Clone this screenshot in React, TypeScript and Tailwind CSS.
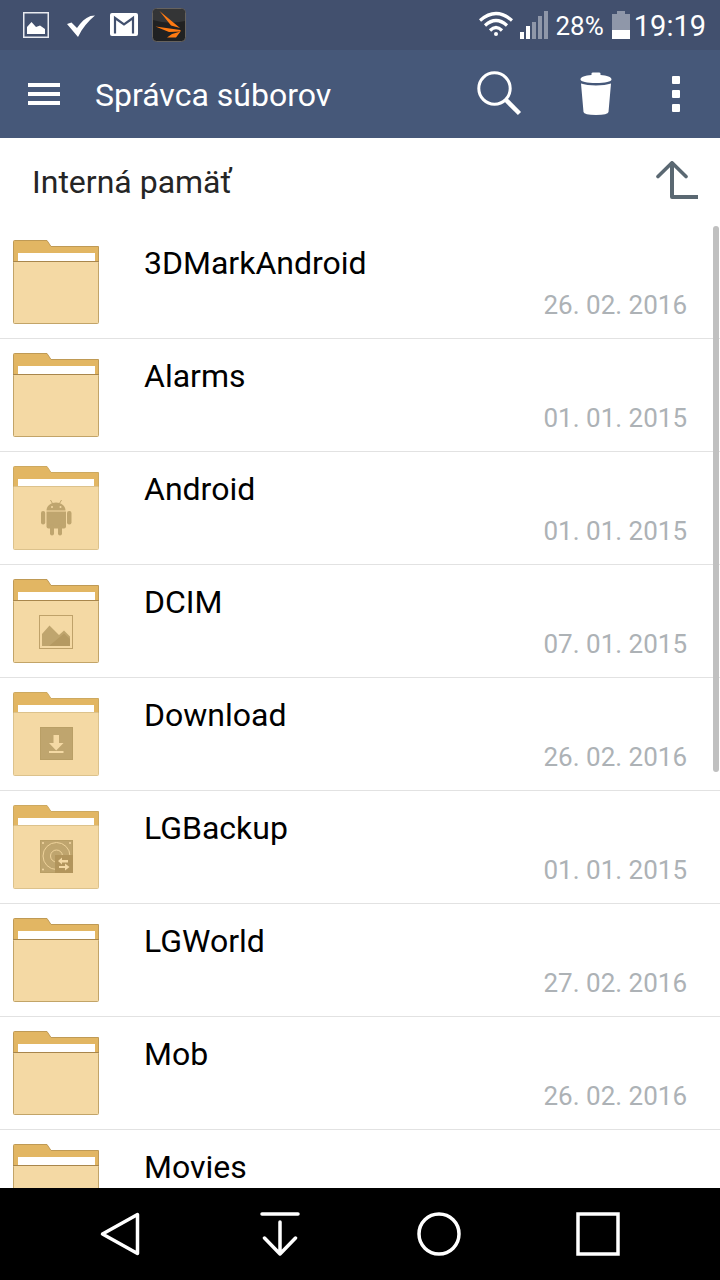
import type { ReactNode } from 'react';

type FolderKind = 'plain' | 'android' | 'image' | 'download' | 'backup';

interface Folder {
  name: string;
  date?: string;
  kind: FolderKind;
}

const folders: Folder[] = [
  { name: '3DMarkAndroid', date: '26. 02. 2016', kind: 'plain' },
  { name: 'Alarms', date: '01. 01. 2015', kind: 'plain' },
  { name: 'Android', date: '01. 01. 2015', kind: 'android' },
  { name: 'DCIM', date: '07. 01. 2015', kind: 'image' },
  { name: 'Download', date: '26. 02. 2016', kind: 'download' },
  { name: 'LGBackup', date: '01. 01. 2015', kind: 'backup' },
  { name: 'LGWorld', date: '27. 02. 2016', kind: 'plain' },
  { name: 'Mob', date: '26. 02. 2016', kind: 'plain' },
  { name: 'Movies', kind: 'plain' },
];

const emblems: Record<FolderKind, ReactNode> = {
  plain: null,
  android: (
    <g fill="#bfa56e">
      <path d="M33.5 44.500c0-4.500 4.200-8 9.500-8s9.500 3.500 9.500 8z" />
      <path d="M37.500 34l2 3.500M48.500 34l-2 3.500" stroke="#bfa56e" strokeWidth="1" />
      <circle cx="39" cy="41" r="1" fill="#f4d9a4" />
      <circle cx="47.500" cy="41" r="1" fill="#f4d9a4" />
      <path d="M33.500 45.500h19.500v15a2 2 0 0 1-2 2h-15.500a2 2 0 0 1-2-2z" />
      <rect x="28" y="45" width="4.200" height="13.500" rx="2.100" />
      <rect x="54" y="45" width="4.500" height="13.500" rx="2.100" />
      <rect x="37" y="58" width="4" height="11.500" rx="2" />
      <rect x="45" y="58" width="4" height="11.500" rx="2" />
    </g>
  ),
  image: (
    <g>
      <rect x="26.500" y="36.500" width="33" height="33" fill="none" stroke="#bfa26a" />
      <path d="M29 67V55l7.500-8.500L46 56l5-4.500 6 6V67z" fill="#bfa56e" />
      <path d="M36 67l15-12.500L57 60v7z" fill="#b59a62" />
    </g>
  ),
  download: (
    <g>
      <rect x="27.500" y="35.500" width="32" height="32" fill="#bfa56e" stroke="#b99f66" />
      <path d="M40.500 43h5.500v8h4.500L43.200 58.500 36 51h4.500zM36 59h14.500v2H36z" fill="#f4d9a4" />
    </g>
  ),
  backup: (
    <g>
      <rect x="27.500" y="35.500" width="32" height="32" fill="#bfa56e" stroke="#b99f66" />
      <circle cx="43.500" cy="51" r="13.500" fill="none" stroke="#efd39b" />
      <circle cx="43.500" cy="51" r="6" fill="none" stroke="#efd39b" />
      <circle cx="30" cy="38" r="1" fill="#f4d9a4" />
      <circle cx="57" cy="38" r="1" fill="#f4d9a4" />
      <circle cx="30" cy="64.500" r="1" fill="#f4d9a4" />
      <rect x="42" y="50" width="18" height="18" fill="#b2955c" />
      <path d="M45 56l4-3.500V55h6v2.500h-6v2zM56.500 62L52 65.500V63h-6v-2h6v-2.500z" fill="#f4d9a4" />
    </g>
  ),
};

function FolderIcon({ kind }: { kind: FolderKind }) {
  // folders with an emblem have a softer outline and a slightly taller front
  const soft = kind !== 'plain' && kind !== 'image';
  const top = soft ? 20 : 21;
  return (
    <svg width="86" height="84" viewBox="0 0 86 84" aria-hidden="true">
      <path
        d="M.5 22V1.500Q.5.500 1.500.500H34l4 6H85.500V22z"
        fill="#e2b663"
        stroke={soft ? '#cda960' : '#bf9a55'}
      />
      <rect x="5" y="13" width={soft ? 76 : 77} height="9" fill="#fff" />
      <rect
        x=".5"
        y={top + 0.5}
        width="85"
        height={83 - top}
        rx="1"
        fill="#f4d9a4"
        stroke={soft ? '#dcc28c' : '#c2a468'}
      />
      {!soft && <path d="M0 21.500h86" stroke="#a8864c" />}
      {emblems[kind]}
    </svg>
  );
}

function StatusBar() {
  return (
    <div className="flex h-[50px] shrink-0 items-center justify-between bg-[#42506e] pl-[22px] pr-[14px] text-white">
      <div className="flex items-center gap-[14px]">
        <svg width="28" height="28" viewBox="0 0 28 28" aria-hidden="true">
          <rect x="1.750" y="1.750" width="24.500" height="24.500" fill="none" stroke="#e8eaf0" strokeWidth="1.500" />
          <path d="M5 23v-7l4.500-5 4.500 5 4-1.500 5 3.500V23z" fill="#fff" />
        </svg>
        <svg width="32" height="28" viewBox="0 0 32 28" aria-hidden="true">
          <path d="M3 13l4.500-1.500 5.500 5.500C17 11 21 7 26.500 5l4.500-.500C24 10 18.500 17 14 26z" fill="#fff" />
        </svg>
        <svg width="28" height="24" viewBox="0 0 28 24" aria-hidden="true">
          <rect x="0" y="0" width="28" height="23" rx="2" fill="#fff" />
          <path
            d="M5 20.500V5L14 11.500 23 5v15.500"
            fill="none"
            stroke="#42506e"
            strokeWidth="2.200"
          />
        </svg>
        <svg width="34" height="34" viewBox="0 0 34 34" aria-hidden="true">
          <rect x=".5" y=".5" width="33" height="33" rx="4" fill="#202122" stroke="#66625e" />
          <path d="M1 5a4 4 0 0 1 4-4h24a4 4 0 0 1 4 4v8Q17 17 1 12z" fill="#343536" />
          <path d="M7.500 3L28 20l-9-2.500zM3.500 18.500L28.500 22v1.500L17 24zM15 29.500l5-3.500 8.500-2.500L24 29.500z" fill="#ff7a12" />
        </svg>
      </div>
      <div className="flex items-center gap-2">
        <svg className="-mr-px" width="34" height="28" viewBox="0 0 34 28" aria-hidden="true">
          <g fill="none" stroke="#fff" strokeWidth="3.200">
            <path d="M1 9.500Q17-4.500 33 9.500" />
            <path d="M6 14.500Q17 4.500 28 14.500" />
            <path d="M11 19.500Q17 13.500 23 19.500" />
          </g>
          <circle cx="17" cy="23" r="2" fill="#fff" />
        </svg>
        <svg width="28" height="28" viewBox="0 0 28 28" aria-hidden="true">
          <path d="M0 21h4v7H0zM6 15h4v13H6z" fill="#fff" />
          <path d="M12 11h4v17h-4zM18 5h4v23h-4zM24 0h4v28h-4z" fill="#8f97a9" />
        </svg>
        <span className="pt-0.5 text-[26px] leading-8">28%</span>
        <svg width="18" height="28" viewBox="0 0 18 28" aria-hidden="true">
          <path d="M5 0h8v3h5v16H0V3h5z" fill="#8f97a9" />
          <path d="M0 19h18v9H0z" fill="#fff" />
        </svg>
        <span className="-ml-1 pt-0.5 text-[29px] leading-8">19:19</span>
      </div>
    </div>
  );
}

function AppBar() {
  return (
    <header className="flex h-[88px] shrink-0 items-center bg-[#465879] pl-7 pr-10 text-white">
      <button aria-label="Menu" className="mr-[35px]">
        <svg className="block" width="32" height="22" viewBox="0 0 32 22" fill="#fff">
          <path d="M0 0h32v4H0zM0 9h32v4H0zM0 18h32v4H0z" />
        </svg>
      </button>
      <h1 className="flex-1 pt-0.5 text-[32px] leading-10">Správca súborov</h1>
      <button aria-label="Hľadať" className="mr-[58px]">
        <svg className="block" width="46" height="46" viewBox="0 0 46 46" fill="none" stroke="#fff">
          <circle cx="18.500" cy="17.500" r="15.700" strokeWidth="3" />
          <path d="M29.500 28.500L43.500 42.500" strokeWidth="4.500" strokeLinecap="butt" />
        </svg>
      </button>
      <button aria-label="Odstrániť" className="mr-[60px]">
        <svg className="block" width="32" height="44" viewBox="0 0 32 44" fill="#fff">
          <path d="M11.500 3V1.500Q11.500.500 13 .5h6Q20.500.500 20.500 1.500V3C27 3.500 31.500 5 31.500 7.500c0 2-6.500 3.500-15.500 3.500S.5 9.500.500 7.500C.5 5 5 3.500 11.500 3z" />
          <path d="M1 11.500C8 14 24 14 31 11.500L28.500 40Q28 43 16 43T3.500 40z" />
        </svg>
      </button>
      <button aria-label="Viac možností" className="-mx-1 px-1">
        <svg className="block" width="8" height="36" viewBox="0 0 8 36" fill="#fff">
          <rect width="8" height="8" rx="1" />
          <rect y="14" width="8" height="8" rx="1" />
          <rect y="28" width="8" height="8" rx="1" />
        </svg>
      </button>
    </header>
  );
}

function NavButton({ label, children }: { label: string; children: ReactNode }) {
  return (
    <button aria-label={label} className="flex flex-1 items-center justify-center">
      <svg
        width="44"
        height="44"
        viewBox="0 0 44 44"
        fill="none"
        stroke="#fff"
        strokeWidth="3.500"
        strokeLinecap="round"
        strokeLinejoin="round"
      >
        {children}
      </svg>
    </button>
  );
}

export default function App() {
  return (
    <div className="flex h-screen flex-col overflow-hidden bg-white font-[Roboto,'Noto_Sans',sans-serif]">
      <StatusBar />
      <AppBar />

      <div className="flex h-[88px] shrink-0 items-center justify-between pl-8 pr-[22px]">
        <h2 className="text-[32px] leading-10 text-[#252525]">Interná pamäť</h2>
        <button aria-label="O úroveň vyššie">
          <svg
            className="block"
            width="42"
            height="42"
            viewBox="0 0 42 42"
            fill="none"
            stroke="#5a6872"
            strokeWidth="4"
            strokeLinecap="round"
            strokeLinejoin="round"
          >
            <path d="M2 15.500L16 1.800 30 15.500" strokeWidth="3.600" />
            <path d="M16 3v33h26" strokeLinecap="butt" />
          </svg>
        </button>
      </div>

      <main className="relative min-h-0 flex-1 overflow-hidden">
        <ul>
          {folders.map(f => (
            <li key={f.name} className="border-b border-[#e2e2e2]">
              <a href="#" className="flex h-28 items-center gap-[45px] pl-[13px] pr-[33px]">
                <FolderIcon kind={f.kind} />
                <div className="flex h-[82px] flex-1 flex-col gap-1 pt-0.5">
                  <span className="text-[32px] leading-10 text-black">{f.name}</span>
                  {f.date && (
                    <span className="text-right text-[26px] leading-9 text-[#adb2b6]">{f.date}</span>
                  )}
                </div>
              </a>
            </li>
          ))}
        </ul>
        <div className="absolute right-px top-0 h-[546px] w-1.5 rounded-full bg-[#c0c0c0]" />
      </main>

      <nav className="flex h-[92px] shrink-0 bg-black pl-[41px] pr-[43px]">
        <NavButton label="Späť">
          <path d="M38.500 2.500v39L3.500 22z" />
        </NavButton>
        <NavButton label="Panel upozornení">
          <path d="M4 2h36M22 10v32M6.500 26L22 42l15.500-16" strokeWidth="3.500" />
        </NavButton>
        <NavButton label="Domov">
          <circle cx="22" cy="22" r="20" />
        </NavButton>
        <NavButton label="Prehľad">
          <rect x="2" y="2" width="40" height="40" strokeLinejoin="miter" />
        </NavButton>
      </nav>
    </div>
  );
}
